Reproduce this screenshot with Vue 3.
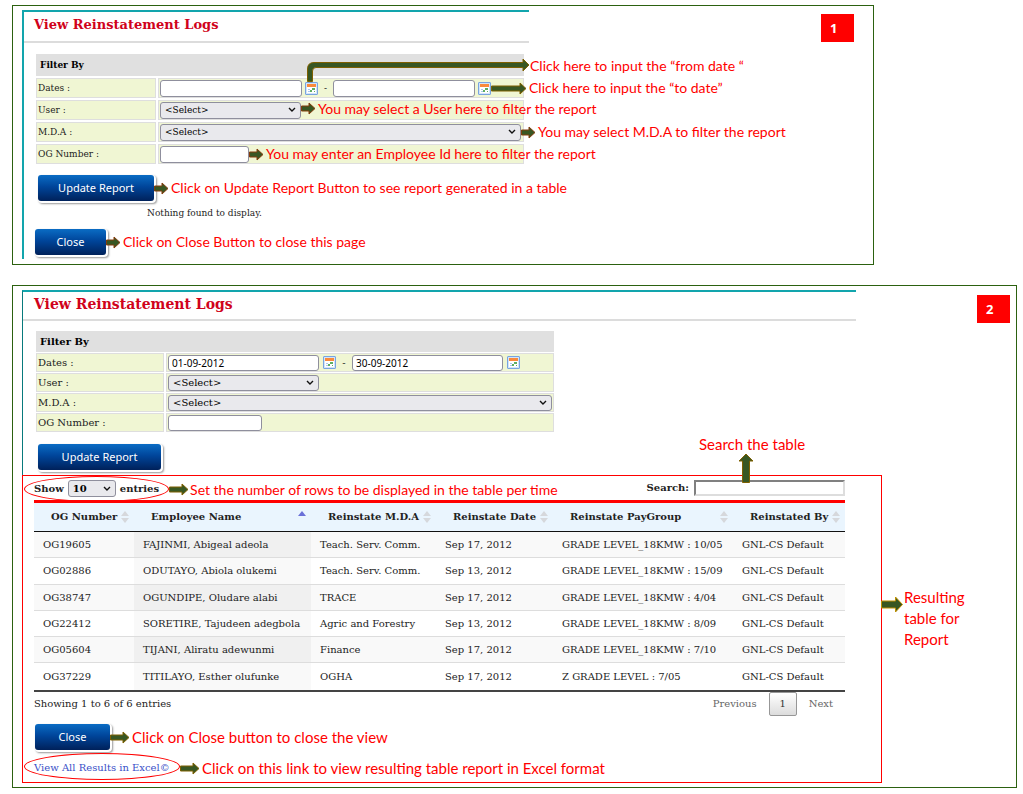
<script setup>
import { ref, h } from 'vue'

const fromDate = ref('01-09-2012')
const toDate = ref('30-09-2012')

const columns = [
  { label: 'OG Number' },
  { label: 'Employee Name', sorted: true },
  { label: 'Reinstate M.D.A' },
  { label: 'Reinstate Date' },
  { label: 'Reinstate PayGroup' },
  { label: 'Reinstated By' },
]

const rows = [
  ['OG19605', 'FAJINMI, Abigeal adeola', 'Teach. Serv. Comm.', 'Sep 17, 2012', 'GRADE LEVEL_18KMW : 10/05', 'GNL-CS Default'],
  ['OG02886', 'ODUTAYO, Abiola olukemi', 'Teach. Serv. Comm.', 'Sep 13, 2012', 'GRADE LEVEL_18KMW : 15/09', 'GNL-CS Default'],
  ['OG38747', 'OGUNDIPE, Oludare alabi', 'TRACE', 'Sep 17, 2012', 'GRADE LEVEL_18KMW : 4/04', 'GNL-CS Default'],
  ['OG22412', 'SORETIRE, Tajudeen adegbola', 'Agric and Forestry', 'Sep 13, 2012', 'GRADE LEVEL_18KMW : 8/09', 'GNL-CS Default'],
  ['OG05604', 'TIJANI, Aliratu adewunmi', 'Finance', 'Sep 17, 2012', 'GRADE LEVEL_18KMW : 7/10', 'GNL-CS Default'],
  ['OG37229', 'TITILAYO, Esther olufunke', 'OGHA', 'Sep 17, 2012', 'Z GRADE LEVEL : 7/05', 'GNL-CS Default'],
]

// Block arrow pointing right, `w` pixels long.
const Arrow = ({ w, edge = '#843c0c' }) =>
  h('svg', { width: w, height: 13, viewBox: `0 0 ${w} 13`, 'aria-hidden': 'true' }, [
    h('path', {
      d: `M0.5 4H${w - 7}V1L${w - 1} 6.5L${w - 7} 12V9H0.5Z`,
      fill: '#385723',
      stroke: edge,
    }),
  ])
Arrow.props = ['w', 'edge']

const Chevron = () =>
  h('svg', { width: 8, height: 6, viewBox: '0 0 8 6', 'aria-hidden': 'true' }, [
    h('path', { d: 'M1 1L4 4L7 1', fill: 'none', stroke: '#111', 'stroke-width': 1.4 }),
  ])

const CalendarIcon = () =>
  h('svg', { width: 13, height: 13, viewBox: '0 0 13 13', 'aria-hidden': 'true' }, [
    h('rect', { x: 0.5, y: 0.5, width: 12, height: 12, rx: 0.5, fill: '#d3e4fa', stroke: '#78a4e0' }),
    h('rect', { x: 2, y: 2, width: 9, height: 9, fill: '#fff' }),
    h('rect', { x: 2, y: 2, width: 9, height: 3, fill: '#f98a3c' }),
    h('path', { d: 'M3 7h2v1H3zM3 9h2v1H3z', fill: '#a9c8ee' }),
    h('path', { d: 'M7 6h3v2H7zM5 8h2v2H5zM9 9h1v1H9z', fill: '#5fae62' }),
  ])
</script>

<template>
  <main class="guide">
    <section class="frame frame-one">
      <span class="badge">1</span>
      <div class="page page-one">
        <h1 class="title">View Reinstatement Logs</h1>
        <form class="form" @submit.prevent>
          <table class="filter">
            <colgroup><col class="c-label" /><col /></colgroup>
            <thead>
              <tr><th colspan="2" scope="colgroup">Filter By</th></tr>
            </thead>
            <tbody>
              <tr>
                <td><label for="a-from">Dates :</label></td>
                <td>
                  <div class="field">
                    <input id="a-from" class="text date" type="text" />
                    <span class="anchor">
                      <button type="button" class="cal" aria-label="Pick from date"><CalendarIcon /></button>
                      <span class="note elbow">
                        <svg width="223" height="25" viewBox="0 0 223 25" aria-hidden="true">
                          <path d="M0.5 24.5V12Q0.5 5.5 7 5.5H216V2L222 8L216 14V10.5H9Q5.5 10.5 5.5 14V24.5Z" fill="#385723" stroke="#7f6000" />
                        </svg>
                        <span>Click here to input the “from date “</span>
                      </span>
                    </span>
                    <span class="dash">-</span>
                    <input class="text date" type="text" aria-label="To date" />
                    <span class="anchor">
                      <button type="button" class="cal" aria-label="Pick to date"><CalendarIcon /></button>
                      <span class="note side"><Arrow :w="36" edge="#7f6000" />Click here to input the “to date”</span>
                    </span>
                  </div>
                </td>
              </tr>
              <tr>
                <td><label for="a-user">User :</label></td>
                <td>
                  <span class="pick medium">
                    <select id="a-user"><option>&lt;Select&gt;</option></select><Chevron />
                    <span class="note side raised"><Arrow :w="15" />You may select a User here to filter the report</span>
                  </span>
                </td>
              </tr>
              <tr>
                <td><label for="a-mda">M.D.A :</label></td>
                <td>
                  <span class="pick wide">
                    <select id="a-mda"><option>&lt;Select&gt;</option></select><Chevron />
                    <span class="note side"><Arrow :w="15" />You may select M.D.A to filter the report</span>
                  </span>
                </td>
              </tr>
              <tr>
                <td><label for="a-og">OG Number :</label></td>
                <td>
                  <span class="anchor">
                    <input id="a-og" class="text short" type="text" />
                    <span class="note side"><Arrow :w="15" />You may enter an Employee Id here to filter the report</span>
                  </span>
                </td>
              </tr>
            </tbody>
          </table>
          <div class="anchor update">
            <button type="submit" class="btn">Update Report</button>
            <span class="note side"><Arrow :w="15" />Click on Update Report Button to see report generated in a table</span>
          </div>
          <p class="empty">Nothing found to display.</p>
          <div class="anchor close">
            <button type="button" class="btn">Close</button>
            <span class="note side"><Arrow :w="15" />Click on Close Button to close this page</span>
          </div>
        </form>
      </div>
    </section>

    <section class="frame frame-two">
      <span class="badge">2</span>
      <div class="page page-two">
        <h1 class="title">View Reinstatement Logs</h1>
        <form class="form" @submit.prevent>
          <table class="filter">
            <colgroup><col class="c-label" /><col /></colgroup>
            <thead>
              <tr><th colspan="2" scope="colgroup">Filter By</th></tr>
            </thead>
            <tbody>
              <tr>
                <td><label for="b-from">Dates :</label></td>
                <td>
                  <div class="field">
                    <input id="b-from" v-model="fromDate" class="text date" type="text" />
                    <button type="button" class="cal" aria-label="Pick from date"><CalendarIcon /></button>
                    <span class="dash">-</span>
                    <input v-model="toDate" class="text date" type="text" aria-label="To date" />
                    <button type="button" class="cal" aria-label="Pick to date"><CalendarIcon /></button>
                  </div>
                </td>
              </tr>
              <tr>
                <td><label for="b-user">User :</label></td>
                <td>
                  <span class="pick medium"><select id="b-user"><option>&lt;Select&gt;</option></select><Chevron /></span>
                </td>
              </tr>
              <tr>
                <td><label for="b-mda">M.D.A :</label></td>
                <td>
                  <span class="pick wide"><select id="b-mda"><option>&lt;Select&gt;</option></select><Chevron /></span>
                </td>
              </tr>
              <tr>
                <td><label for="b-og">OG Number :</label></td>
                <td><input id="b-og" class="text short" type="text" /></td>
              </tr>
            </tbody>
          </table>
          <div class="update"><button type="submit" class="btn">Update Report</button></div>
        </form>
      </div>

      <div class="result">
        <div class="bar">
          <div class="anchor length">
            <label for="b-len">Show</label>
            <span class="pick small"><select id="b-len"><option>10</option></select><Chevron /></span>
            <span>entries</span>
            <i class="ring"></i>
            <span class="note side set-rows"><Arrow :w="20" edge="#7f6000" />Set the number of rows to be displayed in the table per time</span>
          </div>
          <div class="search">
            <label for="b-search">Search:</label>
            <span class="anchor">
              <input id="b-search" type="text" />
              <span class="note large above">
                <span>Search the table</span>
                <svg width="16" height="30" viewBox="0 0 16 30" aria-hidden="true">
                  <path d="M4.5 29.5V8H1L8 1L15 8H11.5V29.5Z" fill="#385723" stroke="#7f6000" />
                </svg>
              </span>
            </span>
          </div>
        </div>

        <table class="grid">
          <colgroup>
            <col class="g1" /><col class="g2" /><col class="g3" /><col class="g4" /><col class="g5" /><col class="g6" />
          </colgroup>
          <thead>
            <tr>
              <th v-for="c in columns" :key="c.label" scope="col">
                <div class="head" :class="{ sorted: c.sorted }">
                  <span>{{ c.label }}</span>
                  <svg width="8" height="12" viewBox="0 0 8 12" aria-hidden="true">
                    <path class="up" d="M4 0L8 5H0Z" />
                    <path v-if="!c.sorted" d="M4 12L8 7H0Z" />
                  </svg>
                </div>
              </th>
            </tr>
          </thead>
          <tbody>
            <tr v-for="r in rows" :key="r[0]">
              <td v-for="(v, i) in r" :key="i">{{ v }}</td>
            </tr>
          </tbody>
        </table>

        <div class="foot">
          <span>Showing 1 to 6 of 6 entries</span>
          <nav class="pager" aria-label="Pages">
            <button type="button">Previous</button>
            <button type="button" class="current">1</button>
            <button type="button">Next</button>
          </nav>
        </div>

        <div class="anchor close">
          <button type="button" class="btn">Close</button>
          <span class="note large side"><Arrow :w="20" edge="#7f6000" />Click on Close button to close the view</span>
        </div>
        <div class="anchor excel">
          <a href="#excel">View All Results in Excel©</a>
          <i class="ring"></i>
          <span class="note large side"><Arrow :w="20" edge="#7f6000" />Click on this link to view resulting table report in Excel format</span>
        </div>

        <span class="note large aside">
          <svg width="22" height="17" viewBox="0 0 22 17" aria-hidden="true">
            <path d="M0.5 5H14.5V1L21.5 8.5L14.5 16V12H0.5Z" fill="#385723" stroke="#bf9000" />
          </svg>
          <span>Resulting<br />table for<br />Report</span>
        </span>
      </div>
    </section>
  </main>
</template>

<style>
body {
  margin: 0;
  background: #fff;
}
</style>

<style scoped>
.guide {
  padding: 5px 6px 6px 12px;
  font-family: "DejaVu Serif", serif;
  font-size: 10px;
  line-height: 14px;
  color: #222;
}
.guide * {
  box-sizing: border-box;
}
.frame {
  position: relative;
  border: 1px solid #2c6110;
}
.frame-one {
  margin-right: 143px;
  padding: 4px 0 5px 9px;
}
.frame-two {
  margin-top: 20px;
  padding: 4px 0 4px 9px;
}
.badge {
  position: absolute;
  top: 8px;
  right: 19px;
  width: 33px;
  padding-left: 9px;
  background: #f00;
  color: #fff;
  font: bold 13px/28px "Noto Sans", sans-serif;
}
.frame-two .badge {
  top: 9px;
  right: 6px;
}

.page {
  border-top: 2px solid #12a5ad;
  border-left: 2px solid #12a5ad;
}
.page-one {
  width: 507px;
  font-size: 9px;
}
.page-two {
  margin-right: 160px;
  border-left: 1px solid #087a7c;
}
.title {
  margin: 0;
  padding: 5px 0 8px 10px;
  border-bottom: 2px solid #dcdcdc;
  color: #d0021b;
  font-size: 13px;
  line-height: 16px;
}
.page-two .title {
  padding: 4px 0 7px 11px;
  font-size: 14px;
}
.form {
  padding: 9px 0 4px 10px;
}
.page-two .form {
  padding: 9px 0 5px 11px;
}

.filter {
  width: 492px;
  table-layout: fixed;
  border-collapse: separate;
  border-spacing: 2px;
}
.page-two .filter {
  width: 522px;
  border-spacing: 2px 1px;
}
.c-label {
  width: 120px;
}
.page-two .c-label {
  width: 128px;
}
.filter th {
  height: 22px;
  padding: 0 4px;
  background: #e0e0e0;
  color: #000;
  text-align: left;
}
.filter td {
  height: 20px;
  padding: 0 1px;
  background: #f0f6d3;
  border: 1px solid #dedede;
  line-height: 0;
  white-space: nowrap;
}
.filter label {
  line-height: 14px;
}
.page-two .filter th {
  height: 21px;
}
.page-two .filter td {
  height: 19px;
}
.field {
  display: flex;
  align-items: center;
}
.text {
  display: block;
  height: 17px;
  padding: 0 3px;
  border: 1px solid #8f8f9d;
  border-radius: 3px;
  background: #fff;
  color: #000;
  font: 10px/14px "Noto Sans", sans-serif;
}
.date {
  width: 142px;
}
.short {
  width: 89px;
}
.page-two .date {
  width: 151px;
}
.page-two .short {
  width: 94px;
}
.page-two .text {
  height: 16px;
}
.cal {
  display: block;
  margin: 0 0 0 3px;
  padding: 0;
  border: 0;
  background: none;
}
.cal svg {
  display: block;
}
.page-two .cal {
  margin-left: 4px;
}
.dash {
  width: 15px;
  text-align: center;
  line-height: 14px;
}
.page-two .dash {
  width: 16px;
}

.pick {
  position: relative;
  display: inline-flex;
  align-items: center;
}
.pick select {
  appearance: none;
  width: 100%;
  height: 17px;
  padding: 0 4px;
  border: 1px solid #8f8f9d;
  border-radius: 3px;
  background: #e9e9ed;
  color: #000;
  font: inherit;
  line-height: 14px;
}
.page-two .pick select {
  height: 16px;
}
.pick > svg {
  position: absolute;
  right: 5px;
  pointer-events: none;
}
.medium {
  width: 141px;
}
.wide {
  width: 361px;
}
.page-two .medium {
  width: 151px;
}
.page-two .wide {
  width: 384px;
}
.small {
  width: 48px;
  font-weight: bold;
}

.btn {
  display: block;
  height: 26px;
  border: 0;
  border-radius: 3px;
  background: linear-gradient(#0a6cc4, #00459a 45%, #00215a);
  box-shadow: 1px 1px 0 1px #fff, 2px 2px 2px 1px #999;
  color: #fff;
  font: 11px/16px "Noto Sans", sans-serif;
}
.update {
  width: 116px;
  margin: 9px 0 0 4px;
}
.page-two .update {
  width: 123px;
  margin-top: 11px;
}
.close {
  width: 71px;
}
.update .btn,
.close .btn {
  width: 100%;
}
.page-one .close {
  margin-left: 1px;
}
.empty {
  margin: 5px 0 9px 113px;
}

.anchor {
  position: relative;
}
.filter .anchor {
  display: inline-block;
}
.note {
  position: absolute;
  z-index: 1;
  display: flex;
  align-items: center;
  color: #f00;
  font: 14px/18px Lato, sans-serif;
  white-space: nowrap;
}
.large {
  font-size: 15px;
}
.side {
  top: 0;
  bottom: 0;
  left: 100%;
  gap: 2px;
}
.raised {
  bottom: 3px;
}
.note svg {
  flex: none;
}
.elbow {
  left: 5px;
  bottom: 13px;
  align-items: flex-start;
}

.result {
  position: relative;
  margin-right: 134px;
  padding: 4px 36px 7px 11px;
  border: 1px solid #f00;
}
.bar {
  display: flex;
  justify-content: space-between;
  height: 20px;
  align-items: flex-start;
  font-weight: bold;
}
.length {
  display: flex;
  align-items: center;
  gap: 4px;
}
.length .pick select {
  height: 17px;
}
.set-rows {
  margin-left: 10px;
  top: 2px;
  gap: 1px;
}
.ring {
  position: absolute;
  top: -4px;
  bottom: -5px;
  left: -10px;
  right: -10px;
  border: 1px solid #f00;
  border-radius: 50%;
}
.search {
  display: flex;
  align-items: center;
  gap: 5px;
}
.search input {
  display: block;
  width: 151px;
  height: 16px;
  border: 2px solid;
  border-color: #808080 #ddd #ddd #808080;
  background: #fff;
  font: inherit;
}
.above {
  bottom: 13px;
  left: 5px;
  flex-direction: column;
  align-items: flex-start;
}
.above svg {
  margin-left: 39px;
}

.grid {
  width: 100%;
  table-layout: fixed;
  border-collapse: separate;
  border-spacing: 0;
  border-top: 3px solid #f00;
  border-bottom: 2px solid #444;
}
.g1 { width: 100px; }
.g2 { width: 177px; }
.g3 { width: 125px; }
.g4 { width: 117px; }
.g5 { width: 180px; }
.g6 { width: 112px; }
.grid th {
  height: 29px;
  padding: 0 5px 0 17px;
  background: #eaf5fe;
  border-bottom: 1px solid #111;
  text-align: left;
  white-space: nowrap;
}
.head {
  display: flex;
  justify-content: space-between;
  align-items: center;
}
.head svg {
  flex: none;
  fill: #d6d8dc;
}
.sorted .up {
  fill: #6a70d8;
}
.grid td {
  height: 26px;
  padding: 0 9px;
  border-bottom: 1px solid #ddd;
  white-space: nowrap;
}
.grid tr:nth-child(4n + 2) td {
  height: 27px;
}
.grid tr:last-child td {
  border-bottom: 0;
}
.grid tbody tr:nth-child(odd) td {
  background: #f9f9f9;
}
.grid tbody tr:nth-child(odd) td:nth-child(2) {
  background: #f0f0f0;
}
.grid tbody tr:nth-child(even) td:nth-child(2) {
  background: #f9f9f9;
}

.foot {
  display: flex;
  justify-content: space-between;
  align-items: center;
  height: 24px;
}
.pager {
  display: flex;
  align-items: center;
}
.pager button {
  height: 24px;
  padding: 0 12px;
  border: 0;
  background: none;
  color: #666;
  font: inherit;
}
.pager .current {
  width: 28px;
  padding: 0;
  border: 1px solid #979797;
  border-radius: 2px;
  background: linear-gradient(#fff, #dcdcdc);
  color: #333;
}
.result .close {
  width: 75px;
  margin: 8px 0 0 1px;
}
.excel {
  width: 134px;
  margin-top: 11px;
}
.excel a {
  color: #3a50c8;
  text-decoration: none;
  white-space: nowrap;
}
.excel .ring {
  top: -8px;
  right: -12px;
}
.excel .side {
  margin-left: 12px;
}
.aside {
  top: 111px;
  left: 100%;
  align-items: flex-start;
  gap: 1px;
  line-height: 21px;
}
.aside svg {
  margin-top: 9px;
}
</style>
